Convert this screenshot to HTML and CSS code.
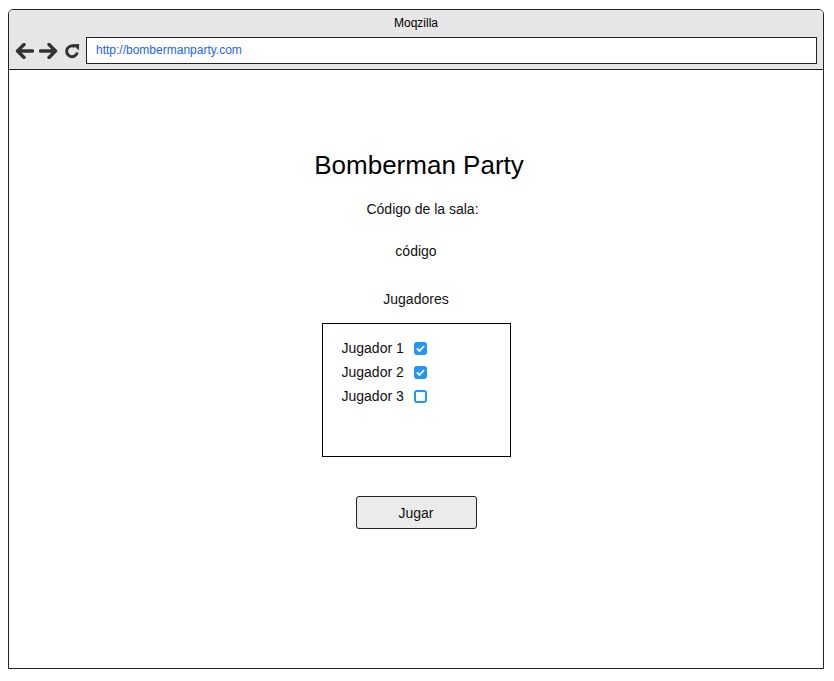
FILE: index.html
```html
<!DOCTYPE html>
<html lang="es">
<head>
<meta charset="utf-8">
<title>Bomberman Party</title>
<link rel="stylesheet" href="styles.css">
</head>
<body>
<div class="window">
  <div class="chrome">
    <div class="chrome-title">Moqzilla</div>
    <div class="toolbar">
      <div class="nav">
        <svg class="nav-icon" width="19" height="16" viewBox="0 0 19 16"><path d="M9 1.5 L2.5 8 L9 14.5 M3 8 H17.5" fill="none" stroke="#333" stroke-width="3.4" stroke-linejoin="round" stroke-linecap="round"/></svg>
        <svg class="nav-icon" width="19" height="16" viewBox="0 0 19 16"><path d="M10 1.5 L16.5 8 L10 14.5 M16 8 H1.5" fill="none" stroke="#333" stroke-width="3.4" stroke-linejoin="round" stroke-linecap="round"/></svg>
        <svg class="nav-icon reload" width="16" height="16" viewBox="0 0 16 16"><path d="M13.3 9.5 A5.4 5.4 0 1 1 10.8 3.6" fill="none" stroke="#333" stroke-width="3"/><path d="M8.5 1.2 L15.2 1 L14.8 7.6 Z" fill="#333"/></svg>
      </div>
      <div class="url">http://bombermanparty.com</div>
    </div>
  </div>
  <main class="page">
    <h1 class="title">Bomberman Party</h1>
    <p class="label">Código de la sala:</p>
    <p class="code">código</p>
    <p class="players-label">Jugadores</p>
    <div class="players">
      <div class="player"><span>Jugador 1</span><span class="check checked"><svg width="9" height="7" viewBox="0 0 9 7"><path d="M1 3.5 L3.5 6 L8 1" fill="none" stroke="#fff" stroke-width="1.8"/></svg></span></div>
      <div class="player"><span>Jugador 2</span><span class="check checked"><svg width="9" height="7" viewBox="0 0 9 7"><path d="M1 3.5 L3.5 6 L8 1" fill="none" stroke="#fff" stroke-width="1.8"/></svg></span></div>
      <div class="player"><span>Jugador 3</span><span class="check"></span></div>
    </div>
    <button class="play">Jugar</button>
  </main>
</div>
</body>
</html>
```

FILE: styles.css
```css
* { box-sizing: border-box; }
html, body { margin: 0; padding: 0; background: #fff; }
body {
  font-family: "Liberation Sans", Arial, sans-serif;
  color: #000;
  padding: 9px 10px 12px 8px;
}
.window {
  width: 816px;
  height: 660px;
  border: 1px solid #222;
  border-radius: 5px 5px 0 0;
  display: flex;
  flex-direction: column;
  overflow: hidden;
}
.chrome {
  height: 60px;
  background: #e6e6e6;
  border-bottom: 1px solid #222;
  flex: none;
}
.chrome-title {
  font-size: 12px;
  line-height: 14px;
  text-align: center;
  padding-top: 6px;
  height: 27px;
  color: #000;
}
.toolbar {
  display: flex;
  align-items: center;
  padding-left: 6px;
  padding-right: 6px;
}
.nav {
  display: flex;
  align-items: center;
  gap: 5px;
  width: 71px;
}
.nav-icon { display: block; }
.reload { margin-left: 1px; }
.url {
  flex: 1;
  height: 27px;
  background: #fff;
  border: 1px solid #222;
  font-size: 12px;
  line-height: 25px;
  color: #1a66e6;
  padding-left: 9px;
}
.page {
  flex: 1;
  display: flex;
  flex-direction: column;
  align-items: center;
  padding-top: 80px;
}
.title {
  margin: 0;
  font-size: 26px;
  font-weight: normal;
  line-height: 30px;
  margin-left: 6px;
}
.label, .code, .players-label {
  margin: 0;
  font-size: 14px;
  line-height: 18px;
  color: #111;
}
.label { margin-top: 20px; margin-left: 13px; }
.code { margin-top: 24px; }
.players-label { margin-top: 30px; }
.players {
  margin-top: 15px;
  width: 189px;
  height: 134px;
  border: 1px solid #000;
  padding: 12px 0 0 19px;
  display: flex;
  flex-direction: column;
}
.player {
  display: flex;
  align-items: center;
  height: 24px;
  font-size: 14px;
  color: #111;
  gap: 10px;
}
.check {
  width: 13px;
  height: 13px;
  border-radius: 3px;
  border: 2px solid #2196f3;
  background: #fff;
  display: flex;
  align-items: center;
  justify-content: center;
}
.check.checked { background: #2196f3; }
.check svg { display: block; }
.play {
  margin-top: 39px;
  width: 121px;
  height: 33px;
  background: #ebebeb;
  border: 1px solid #222;
  border-radius: 3px;
  font-family: "Liberation Sans", Arial, sans-serif;
  font-size: 14px;
  color: #111;
  padding: 0;
}
```
